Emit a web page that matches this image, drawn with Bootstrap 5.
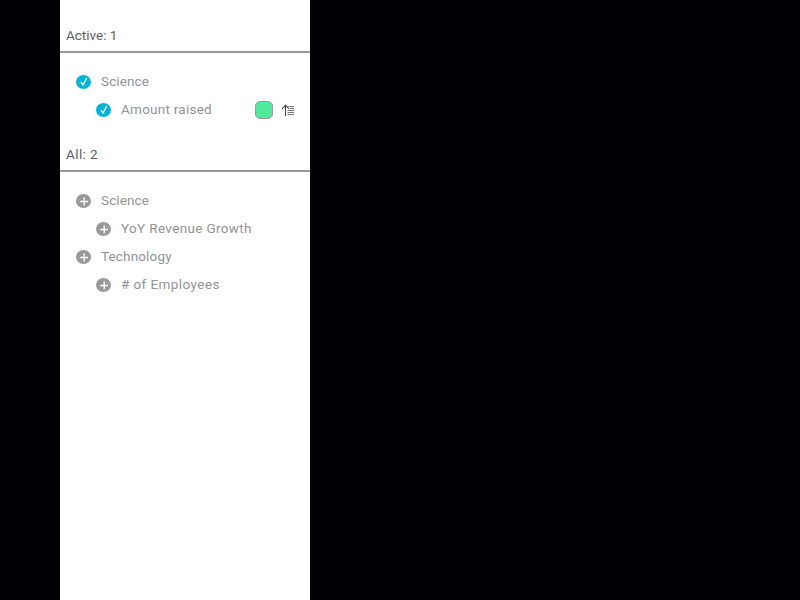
<!DOCTYPE html>
<html lang="en">
<head>
<meta charset="utf-8">
<meta name="viewport" content="width=device-width, initial-scale=1">
<title>Layers</title>
<link href="https://cdn.jsdelivr.net/npm/bootstrap@5.3.0/dist/css/bootstrap.min.css" rel="stylesheet">
<style>
body { background: #000005; font-family: Roboto, "Liberation Sans", sans-serif; font-size: 13.5px; color: #939393; overflow: hidden; }
.layer-panel { width: 250px; margin-left: 60px; }
.panel-title { height: 35px; padding: 0 6px; line-height: 35px; font-size: 13.5px; font-weight: 400; color: #606060; border-bottom: 2px solid #999; }
.first-block { padding-top: 18px; }
.second-block { padding-top: 13px; }
.layer-list { padding: 15px 15px 0 16px; }
.layer-row { height: 28px; line-height: 28px; }
.layer-row > span:first-of-type { padding-bottom: 1px; line-height: 27px; }
.sub { padding-left: 20px; }
.state { width: 15px; height: 14px; margin-right: 10px; flex: none; }
.swatch { width: 18px; height: 18px; border: 1px solid #999; border-radius: 5px; background: #50e89b; margin-right: 8px; }
.t-active { letter-spacing: 0; }
.t-all { letter-spacing: .4px; }
.t-sci { letter-spacing: .12px; }
.t-amt { letter-spacing: .25px; }
.t-yoy { letter-spacing: .35px; }
.t-tech { letter-spacing: .15px; }
.t-emp { letter-spacing: .42px; }
</style>
<script src="https://cdn.jsdelivr.net/npm/bootstrap@5.3.0/dist/js/bootstrap.bundle.min.js"></script>
</head>
<body>
<svg width="0" height="0" class="position-absolute" aria-hidden="true">
  <symbol id="on" viewBox="0 0 15 14"><ellipse cx="7.5" cy="7" rx="7.5" ry="7" fill="#00b5d6"/><path d="M5 7.2 7 10 10.8 3" fill="none" stroke="#fff" stroke-width="1.4"/></symbol>
  <symbol id="add" viewBox="0 0 15 14"><ellipse cx="7.5" cy="7" rx="7.5" ry="7" fill="#999"/><path d="M4.2 7.5h8M8.2 3.5v8" fill="none" stroke="#fff" stroke-width="1.4"/></symbol>
</svg>
<main class="layer-panel bg-white vh-100">
  <section class="first-block">
    <h2 class="panel-title m-0"><span class="t-active">Active: 1</span></h2>
    <div class="layer-list">
      <div class="layer-row d-flex align-items-center"><svg class="state"><use href="#on"/></svg><span class="t-sci">Science</span></div>
      <div class="layer-row sub d-flex align-items-center"><svg class="state"><use href="#on"/></svg><span class="t-amt">Amount raised</span>
        <span class="swatch ms-auto"></span>
        <svg width="14" height="14" viewBox="0 0 14 14" fill="none" stroke="#444"><path d="M4.5 13V2.5M1 5.8 4.5 2.3 8 5.8" stroke-width="1.1"/><path d="M7.5 3.5H13M9 5.5h4M6.5 7.5H13M6.5 9.5H13M6.5 11.5H13" stroke="#777"/></svg>
      </div>
    </div>
  </section>
  <section class="second-block">
    <h2 class="panel-title m-0"><span class="t-all">All: 2</span></h2>
    <div class="layer-list">
      <div class="layer-row d-flex align-items-center"><svg class="state"><use href="#add"/></svg><span class="t-sci">Science</span></div>
      <div class="layer-row sub d-flex align-items-center"><svg class="state"><use href="#add"/></svg><span class="t-yoy">YoY Revenue Growth</span></div>
      <div class="layer-row d-flex align-items-center"><svg class="state"><use href="#add"/></svg><span class="t-tech">Technology</span></div>
      <div class="layer-row sub d-flex align-items-center"><svg class="state"><use href="#add"/></svg><span class="t-emp"># of Employees</span></div>
    </div>
  </section>
</main>
</body>
</html>
